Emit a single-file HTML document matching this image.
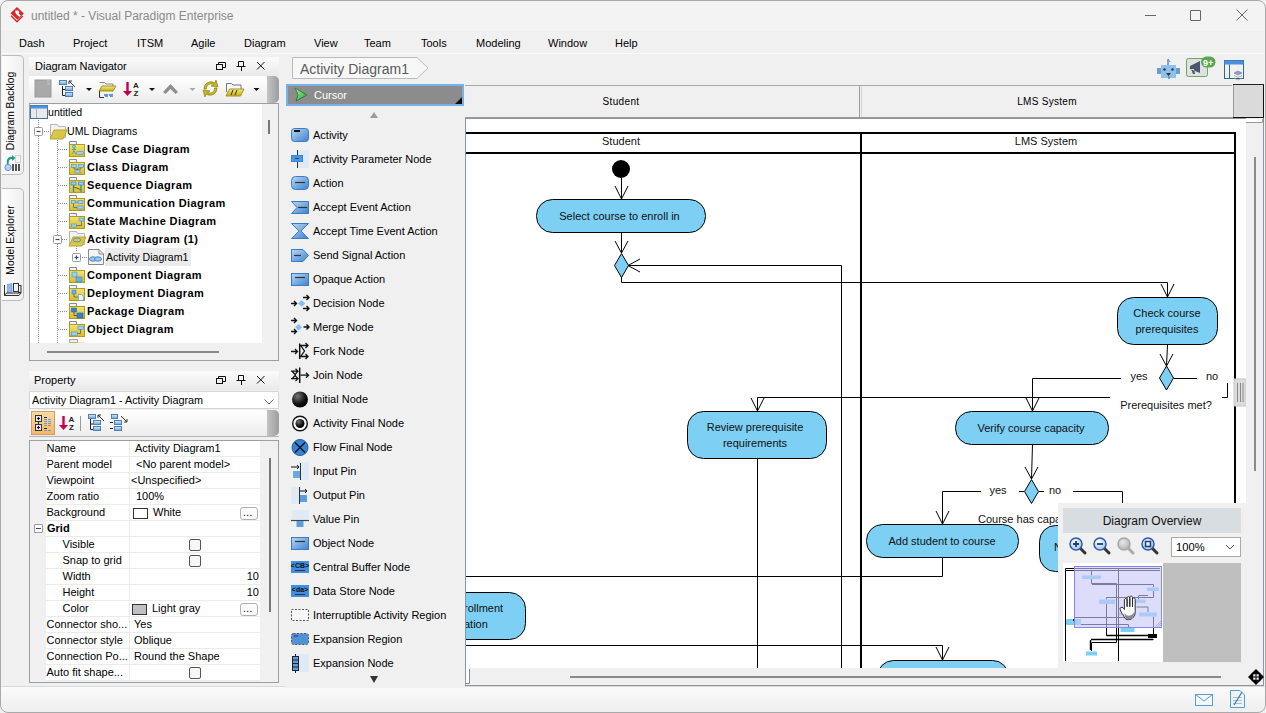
<!DOCTYPE html>
<html><head><meta charset="utf-8">
<style>
*{box-sizing:border-box;margin:0;padding:0}
html,body{width:1266px;height:713px;overflow:hidden;background:#f0f0f0;font-family:"Liberation Sans",sans-serif;font-size:11px;color:#000}
.a{position:absolute}
.t{position:absolute;white-space:nowrap;line-height:14px}
#win{position:absolute;left:0;top:0;width:1266px;height:713px;background:#f0f0f0;overflow:hidden}
.mi{position:absolute;top:36px;font-size:11px;line-height:14px}
.hdr{position:absolute;background:linear-gradient(#fbfbfb,#e9e9e9)}
.tb{position:absolute;background:linear-gradient(#ffffff,#ececec);border-radius:0 6px 6px 0}
.grip{position:absolute;background:linear-gradient(90deg,#c4c4c4,#9d9d9d);border-radius:0 5px 5px 0}
.tr{position:absolute;white-space:nowrap;line-height:14px;font-size:11px}
.b{font-weight:bold}
.pi{position:absolute;left:313px;white-space:nowrap;font-size:11px;line-height:14px;color:#000}
.pr{position:absolute;left:46px;width:214px;height:16px;border-bottom:1px solid #ececec;background:#fff}
.pr span{position:absolute;top:1px;white-space:nowrap;font-size:11px;line-height:14px}
.node{position:absolute;background:#7dcff4;border:1px solid #222;border-radius:16px;display:flex;align-items:center;justify-content:center;text-align:center;font-size:11px;line-height:16px;color:#111}
</style></head><body>
<div id="win">
 <!-- title bar -->
 <div class="a" style="left:0;top:0;width:1266px;height:31px;background:#f3f3f3"></div>
 <svg class="a" style="left:8px;top:5px" width="18" height="20" viewBox="8 5 18 20"><path d="M17 7 L23.8 13.6 L17.6 19.8 L10.4 13.2 Z" fill="#d42a2a"/><path d="M10.6 16.2 L17 22.7 L23.3 16.4 L22.3 15.4 L17 20.8 L11.6 15.2 Z" fill="#d42a2a"/><path d="M15.3 10.6 L18.3 10.4 L19.3 12.2 L18.6 13.6 L20.6 15.6 L19.4 17 L16.6 14.4 L15.4 12.8 Z" fill="#fff"/></svg>
 <div class="t" style="left:31px;top:9px;font-size:12px;color:#8a8a8a">untitled * - Visual Paradigm Enterprise</div>
 <div class="a" style="left:1145px;top:15px;width:11px;height:1px;background:#666"></div>
 <div class="a" style="left:1190px;top:10px;width:11px;height:11px;border:1px solid #666;border-radius:1px"></div>
 <svg class="a" style="left:1236px;top:9px" width="12" height="12"><path d="M0.5 0.5 L11.5 11.5 M11.5 0.5 L0.5 11.5" stroke="#666" stroke-width="1"/></svg>
 <!-- menu -->
 <span class="mi" style="left:19px">Dash</span>
 <span class="mi" style="left:73px">Project</span>
 <span class="mi" style="left:137px">ITSM</span>
 <span class="mi" style="left:191px">Agile</span>
 <span class="mi" style="left:244px">Diagram</span>
 <span class="mi" style="left:314px">View</span>
 <span class="mi" style="left:364px">Team</span>
 <span class="mi" style="left:421px">Tools</span>
 <span class="mi" style="left:476px">Modeling</span>
 <span class="mi" style="left:548px">Window</span>
 <span class="mi" style="left:615px">Help</span>

 <div class="a" style="left:0;top:53px;width:1266px;height:1px;background:#fbfbfb"></div>
 <!-- window border -->
 <div class="a" style="left:0;top:0;width:1266px;height:713px;border:1px solid #a9a9a9;border-radius:8px 8px 8px 8px;pointer-events:none;z-index:50"></div>

 <!-- LEFT vertical tabs -->
 <div class="a" style="left:2px;top:55px;width:22px;height:120px;background:linear-gradient(90deg,#fdfdfd,#f0f0f0);border:1px solid #bcbcbc;border-left:none;border-radius:0 5px 5px 0"></div>
 <div class="a" style="left:2px;top:188px;width:22px;height:113px;background:linear-gradient(90deg,#fdfdfd,#f0f0f0);border:1px solid #bcbcbc;border-left:none;border-radius:0 5px 5px 0"></div>
 <div class="t" style="left:-34px;top:104px;width:90px;transform:rotate(-90deg);font-size:10.3px;text-align:center">Diagram Backlog</div>
 <div class="t" style="left:-34px;top:233px;width:90px;transform:rotate(-90deg);font-size:10.3px;text-align:center">Model Explorer</div>
 <svg class="a" style="left:3px;top:153px" width="20" height="20" viewBox="3 153 20 20">
  <path d="M7 164 C6 159 9 156 12 157 L12 155 L15.5 158 L12 161 L12 159 C10 158.5 8.5 160 8.5 164 Z" fill="#1f9a86"/>
  <circle cx="8" cy="167.5" r="3.2" fill="#b8d0f0" stroke="#6d98d8"/>
  <rect x="12" y="164" width="2" height="7" fill="#555"/><rect x="15" y="164" width="2" height="7" fill="#555"/><rect x="18" y="164" width="2" height="7" fill="#555"/>
  <rect x="15.5" y="155.5" width="5" height="7" fill="none" stroke="#d0d0d0"/>
 </svg>
 <svg class="a" style="left:3px;top:280px" width="20" height="18" viewBox="3 280 20 18">
  <path d="M7.5 284.5 L12 283.5 V292 L7.5 293 Z" fill="#8eb8ee" stroke="#5c8fd6" stroke-width="0.6"/>
  <rect x="13.5" y="283.5" width="5" height="8" fill="#eef4fc" stroke="#333"/>
  <rect x="18.5" y="285.5" width="2.5" height="7" fill="#e8e8e8" stroke="#333"/>
  <path d="M4.5 295.5 H19 L21 293 H6.5 Z" fill="#e8e8e8" stroke="#333"/>
  <path d="M4.5 285 V295.5" stroke="#333"/>
 </svg>
 <!-- DIAGRAM NAVIGATOR -->
 <div class="hdr" style="left:29px;top:57px;width:250px;height:19px"></div>
 <div class="t" style="left:35px;top:59px">Diagram Navigator</div>
 <div class="tb" style="left:29px;top:76px;width:240px;height:27px"></div>
 <div class="grip" style="left:267px;top:76px;width:12px;height:27px"></div>
 <div class="a" style="left:29px;top:103px;width:250px;height:258px;border:1px solid #9a9fa6;background:#f0f0f0"></div>
 <div class="a" style="left:30px;top:104px;width:232px;height:239px;background:#fff"></div>
 <div class="a" style="left:268px;top:120px;width:2px;height:14px;background:#777"></div>

 <!-- NAV TOOLBAR ICONS -->
 <svg class="a" style="left:29px;top:76px" width="240" height="27" viewBox="29 76 240 27">
  <defs>
   <linearGradient id="bx" x1="0" y1="0" x2="0" y2="1"><stop offset="0" stop-color="#d8ebfc"/><stop offset="1" stop-color="#6fa5dc"/></linearGradient>
   <linearGradient id="yf" x1="0" y1="0" x2="0" y2="1"><stop offset="0" stop-color="#f4ea90"/><stop offset="1" stop-color="#c2aa10"/></linearGradient>
  </defs>
  <rect x="35" y="80" width="16" height="17" fill="#a9a9a9" stroke="#9a9a9a"/>
  <path d="M47 81 h3 M47 84 h3" stroke="#c8c8c8"/>
  <path d="M62.5 86 V95.5 H65 M62.5 89.5 H65" stroke="#222" fill="none"/>
  <rect x="59.5" y="80.5" width="7" height="4" fill="url(#bx)" stroke="#4f7fb8"/>
  <rect x="65.5" y="86.5" width="7" height="4" fill="url(#bx)" stroke="#4f7fb8"/>
  <rect x="65.5" y="92.5" width="7" height="4" fill="url(#bx)" stroke="#4f7fb8"/>
  <path d="M69 81 L75 87 M69 81 h3 M69 81 v3" stroke="#333" fill="none"/>
  <path d="M86 88 h6 l-3 3 z" fill="#111"/>
  <path d="M99.5 82.5 h5 l1.5 1.5 h7 v3" fill="#f4f4f4" stroke="#888"/>
  <path d="M99 91 L102 86 H116 L113 91 Z" fill="url(#yf)" stroke="#a89410"/>
  <path d="M99.5 91 V97.5 H104 M104 95 h4 M109 95 h4" stroke="#333" fill="none"/>
  <rect x="105" y="94" width="3" height="3" fill="#5a9ae0"/><rect x="110" y="94" width="3" height="3" fill="#5a9ae0"/>
  <path d="M127.5 82 V93" stroke="#c8004a" stroke-width="2.4"/><path d="M123 91 L127.5 96 L132 91 Z" fill="#c8004a"/>
  <text x="136" y="88" font-size="8" font-weight="bold" text-anchor="middle" fill="#222">A</text>
  <text x="136" y="96" font-size="8" font-weight="bold" text-anchor="middle" fill="#222">Z</text>
  <path d="M149 88 h6 l-3 3 z" fill="#111"/>
  <path d="M163 92 L170.5 84 L178 92 L175.5 94 L170.5 89 L165.5 94 Z" fill="#8e8e8e"/>
  <path d="M189.5 88 h6 l-3 3 z" fill="#a8a8a8"/>
  <path d="M204 89 C204 83 210 80 215 83 L216 80 L218 87 L211 86 L213.5 84.5 C210 83 206 85 206.5 89 Z" fill="#c8b820" stroke="#7a6e08" stroke-width="0.6"/>
  <path d="M217 88 C217 94 211 97 206 94 L205 97 L203 90 L210 91 L207.5 92.5 C211 94 215 92 214.5 88 Z" fill="#c8b820" stroke="#7a6e08" stroke-width="0.6"/>
  <path d="M226.5 92 V83.5 h5 l1.5 1.5 h8 v4" fill="#f8f8f8" stroke="#777"/>
  <path d="M226 96 L229.5 89 H244 L240.5 96 Z" fill="url(#yf)" stroke="#a89410"/>
  <path d="M233 90 L231 95 M237 90 L235 95" stroke="#333"/>
  <path d="M253.5 88 h6 l-3 3 z" fill="#111"/>
 </svg>
 <!-- TREE -->
 <svg class="a" style="left:30px;top:104px" width="232" height="239" viewBox="30 104 232 239">
  <defs><linearGradient id="fy" x1="0" y1="0" x2="0" y2="1"><stop offset="0" stop-color="#f4e478"/><stop offset="1" stop-color="#d6bc2a"/></linearGradient></defs>
  <g stroke="#8a8a8a" stroke-dasharray="1 1" fill="none">
   <path d="M38.5 120 V343 M42 131.5 H49 M57.5 140 V343 M76.5 246 V252"/>
   <path d="M58 149.5 H68"/>
   <path d="M58 167.5 H68"/>
   <path d="M58 185.5 H68"/>
   <path d="M58 203.5 H68"/>
   <path d="M58 221.5 H68"/>
   <path d="M62 239.5 H68"/>
   <path d="M80 257.5 H87"/>
   <path d="M58 275.5 H68"/>
   <path d="M58 293.5 H68"/>
   <path d="M58 311.5 H68"/>
   <path d="M58 329.5 H68"/>
   <path d="M58 347.5 H68"/>
  </g>
  <rect x="30.5" y="105.5" width="17" height="13" fill="#e9e9e9" stroke="#4a6f94"/><rect x="30.5" y="105.5" width="17" height="3" fill="#4d8fe0"/><path d="M36.5 109 V118" stroke="#9bb"/>
  <rect x="34.5" y="127.5" width="8" height="8" fill="#fff" stroke="#9a9a9a" rx="1"/><path d="M36.5 131.5 H40.5" stroke="#2b4b8c" stroke-width="1.2"/>
  <rect x="53.5" y="235.5" width="8" height="8" fill="#fff" stroke="#9a9a9a" rx="1"/><path d="M55.5 239.5 H59.5" stroke="#2b4b8c" stroke-width="1.2"/>
  <rect x="72.5" y="253.5" width="8" height="8" fill="#fff" stroke="#9a9a9a" rx="1"/><path d="M74.5 257.5 H78.5" stroke="#2b4b8c" stroke-width="1.2"/><path d="M76.5 255.5 V259.5" stroke="#2b4b8c" stroke-width="1.2"/>
  <path d="M50.5 124.5 h7 l1 2 h7 v11 h-15 z" fill="#f2f2f2" stroke="#b5b5b5"/><path d="M50 139 L54 130 H67 L63 139 Z" fill="#d8c84a" stroke="#b9a52a"/>
  <path d="M69.5 141.5 h7 v3 h-7 z" fill="#f4f4f4" stroke="#8a8a8a"/>
  <rect x="69.5" y="144.5" width="15" height="12" fill="url(#fy)" stroke="#b09a20"/>
  <g transform="translate(0,0)"><circle cx="74" cy="146.5" r="1.5" fill="#8cc4ec" stroke="#3a86c8" stroke-width="0.6"/><path d="M74 148 V151 L72 154 M74 151 L76 154 M72 149.5 H76" stroke="#3a9a8a" stroke-width="0.8" fill="none"/><rect x="76.5" y="151.5" width="7" height="3" rx="1.2" fill="#9cd0f0" stroke="#4a90c8" stroke-width="0.6"/></g>
  <path d="M69.5 159.5 h7 v3 h-7 z" fill="#f4f4f4" stroke="#8a8a8a"/>
  <rect x="69.5" y="162.5" width="15" height="12" fill="url(#fy)" stroke="#b09a20"/>
  <g transform="translate(0,18)"><rect x="71.5" y="146.5" width="5" height="3" fill="#9cd0f0" stroke="#4a90c8" stroke-width="0.6"/><rect x="78.5" y="146.5" width="5" height="3" fill="#9cd0f0" stroke="#4a90c8" stroke-width="0.6"/><rect x="75" y="152" width="5" height="3" fill="#9cd0f0" stroke="#4a90c8" stroke-width="0.6"/><path d="M74 149.5 V151 H81 V149.5 M77.5 151 V152" stroke="#555" stroke-width="0.7" fill="none"/></g>
  <path d="M69.5 177.5 h7 v3 h-7 z" fill="#f4f4f4" stroke="#8a8a8a"/>
  <rect x="69.5" y="180.5" width="15" height="12" fill="url(#fy)" stroke="#b09a20"/>
  <g transform="translate(0,36)"><rect x="71" y="146" width="5" height="3" fill="#9cd0f0" stroke="#2a80c8" stroke-width="0.7"/><rect x="78.5" y="146" width="5" height="3" fill="#9cd0f0" stroke="#2a80c8" stroke-width="0.7"/><path d="M73.5 149 V156 M81 149 V156" stroke="#2a80c8" stroke-width="1.2"/><path d="M74 151 L80.5 153.5" stroke="#333" stroke-width="0.7"/></g>
  <path d="M69.5 195.5 h7 v3 h-7 z" fill="#f4f4f4" stroke="#8a8a8a"/>
  <rect x="69.5" y="198.5" width="15" height="12" fill="url(#fy)" stroke="#b09a20"/>
  <g transform="translate(0,54)"><rect x="71.5" y="146.5" width="4" height="3" fill="#9cd0f0" stroke="#4a90c8" stroke-width="0.6"/><rect x="78" y="146.5" width="5" height="3" fill="#9cd0f0" stroke="#4a90c8" stroke-width="0.6"/><rect x="77" y="152" width="6" height="3" fill="#9cd0f0" stroke="#4a90c8" stroke-width="0.6"/><path d="M73.5 149.5 V153.5 H77 M75.5 148 H78" stroke="#555" stroke-width="0.7" fill="none"/></g>
  <path d="M69.5 213.5 h7 v3 h-7 z" fill="#f4f4f4" stroke="#8a8a8a"/>
  <rect x="69.5" y="216.5" width="15" height="12" fill="url(#fy)" stroke="#b09a20"/>
  <g transform="translate(0,72)"><rect x="79" y="146" width="5" height="3" fill="#9cd0f0" stroke="#4a90c8" stroke-width="0.6"/><rect x="71.5" y="152" width="5" height="3" fill="#9cd0f0" stroke="#4a90c8" stroke-width="0.6"/><path d="M81.5 149 V153.5 H76.5" stroke="#555" stroke-width="0.7" fill="none"/></g>
  <path d="M69.5 231.5 h7 l1 2 h7 v11 h-15 z" fill="#f2f2f2" stroke="#b5b5b5"/><path d="M69 246 L73 237 H86 L82 246 Z" fill="#d8c84a" stroke="#b9a52a"/>
  <ellipse cx="77" cy="240" rx="4" ry="2" fill="none" stroke="#5a8fc8"/>
  <path d="M69.5 267.5 h7 v3 h-7 z" fill="#f4f4f4" stroke="#8a8a8a"/>
  <rect x="69.5" y="270.5" width="15" height="12" fill="url(#fy)" stroke="#b09a20"/>
  <g transform="translate(0,126)"><rect x="72" y="146" width="5" height="5" fill="#9cd0f0" stroke="#4a90c8" stroke-width="0.6"/><rect x="76" y="151" width="6" height="5" fill="#6ab0e8" stroke="#3a80c8" stroke-width="0.6"/></g>
  <path d="M69.5 285.5 h7 v3 h-7 z" fill="#f4f4f4" stroke="#8a8a8a"/>
  <rect x="69.5" y="288.5" width="15" height="12" fill="url(#fy)" stroke="#b09a20"/>
  <g transform="translate(0,144)"><rect x="72" y="146" width="4" height="4" fill="#6ab0e8" stroke="#3a80c8" stroke-width="0.6"/><path d="M78.5 150.5 h3 l2 2 v4 h-5 z" fill="#e8f4fc" stroke="#4a90c8" stroke-width="0.6"/><path d="M74 150 V153 H78" stroke="#555" stroke-width="0.7" fill="none"/></g>
  <path d="M69.5 303.5 h7 v3 h-7 z" fill="#f4f4f4" stroke="#8a8a8a"/>
  <rect x="69.5" y="306.5" width="15" height="12" fill="url(#fy)" stroke="#b09a20"/>
  <g transform="translate(0,162)"><rect x="71.5" y="146" width="5" height="4" fill="#3a80d0" stroke="#2a60a8" stroke-width="0.6"/><rect x="77" y="151" width="6" height="5" fill="#3a80d0" stroke="#2a60a8" stroke-width="0.6"/><path d="M74 150 V153.5 H77" stroke="#333" stroke-width="0.7" fill="none"/></g>
  <path d="M69.5 321.5 h7 v3 h-7 z" fill="#f4f4f4" stroke="#8a8a8a"/>
  <rect x="69.5" y="324.5" width="15" height="12" fill="url(#fy)" stroke="#b09a20"/>
  <g transform="translate(0,180)"><rect x="78" y="146" width="5.5" height="3.5" fill="#9cd0f0" stroke="#4a90c8" stroke-width="0.6"/><rect x="71.5" y="152" width="6" height="3.5" fill="#9cd0f0" stroke="#4a90c8" stroke-width="0.6"/><path d="M80.5 149.5 V153.5 H77.5" stroke="#555" stroke-width="0.7" fill="none"/></g>
  <path d="M69.5 339.5 h8 v3 h-8 z" fill="#ececec" stroke="#a0a0a0"/><rect x="69.5" y="342.5" width="15" height="5" fill="#dcc94c"/>
  <path d="M88.5 249.5 H99 L103.5 254 V264.5 H88.5 Z" fill="#f4f4f4" stroke="#888"/><path d="M99 249.5 V254 H103.5" fill="none" stroke="#888"/><ellipse cx="93" cy="259" rx="3.5" ry="2.2" fill="#9cc8f0" stroke="#4a86c8"/><ellipse cx="98" cy="259" rx="3.5" ry="2.2" fill="#9cc8f0" stroke="#4a86c8"/>
  <rect x="105" y="248" width="86" height="18" fill="#ebebeb"/>
 </svg>
 <div class="tr" style="left:48px;top:105px;font-size:10.6px">untitled</div>
 <div class="tr" style="left:67px;top:124px;font-size:10.6px">UML Diagrams</div>
 <div class="tr b" style="left:87px;top:142px;font-size:11px;letter-spacing:0.4px">Use Case Diagram</div>
 <div class="tr b" style="left:87px;top:160px;font-size:11px;letter-spacing:0.4px">Class Diagram</div>
 <div class="tr b" style="left:87px;top:178px;font-size:11px;letter-spacing:0.4px">Sequence Diagram</div>
 <div class="tr b" style="left:87px;top:196px;font-size:11px;letter-spacing:0.4px">Communication Diagram</div>
 <div class="tr b" style="left:87px;top:214px;font-size:11px;letter-spacing:0.4px">State Machine Diagram</div>
 <div class="tr b" style="left:87px;top:232px;font-size:11px;letter-spacing:0.4px">Activity Diagram (1)</div>
 <div class="tr" style="left:106px;top:250px;font-size:10.6px">Activity Diagram1</div>
 <div class="tr b" style="left:87px;top:268px;font-size:11px;letter-spacing:0.4px">Component Diagram</div>
 <div class="tr b" style="left:87px;top:286px;font-size:11px;letter-spacing:0.4px">Deployment Diagram</div>
 <div class="tr b" style="left:87px;top:304px;font-size:11px;letter-spacing:0.4px">Package Diagram</div>
 <div class="tr b" style="left:87px;top:322px;font-size:11px;letter-spacing:0.4px">Object Diagram</div>
 <div class="a" style="left:47px;top:351px;width:172px;height:2px;background:#888"></div>

 <!-- PROPERTY -->
 <div class="hdr" style="left:29px;top:371px;width:250px;height:19px"></div>
 <div class="t" style="left:34px;top:373px">Property</div>
 <div class="a" style="left:29px;top:391px;width:250px;height:18px;background:#fff;border:1px solid #d5d5d5"></div>
 <div class="t" style="left:32px;top:393px;font-size:10.8px">Activity Diagram1 - Activity Diagram</div>
 <div class="tb" style="left:29px;top:410px;width:240px;height:26px"></div>
 <div class="grip" style="left:267px;top:410px;width:12px;height:26px"></div>
 <div class="a" style="left:29px;top:440px;width:250px;height:243px;border:1px solid #9a9fa6;background:#f0f0f0"></div>
 <div class="a" style="left:29px;top:436px;width:250px;height:1px;background:#b4b4b4"></div>
 <!-- PROP TOOLBAR ICONS -->
 <svg class="a" style="left:29px;top:410px" width="240" height="26" viewBox="29 410 240 26">
  <defs><linearGradient id="og" x1="0" y1="0" x2="0" y2="1"><stop offset="0" stop-color="#ffdba0"/><stop offset="1" stop-color="#f7b565"/></linearGradient></defs>
  <rect x="31.5" y="411.5" width="23" height="23" fill="url(#og)" stroke="#caa070"/>
  <rect x="35.5" y="415.5" width="6" height="6" fill="#dbe9f8" stroke="#333"/><path d="M37 418.5 h3 M38.5 417 v3" stroke="#111"/>
  <rect x="35.5" y="424.5" width="6" height="6" fill="#dbe9f8" stroke="#333"/><path d="M37 427.5 h3 M38.5 426 v3" stroke="#111"/>
  <path d="M38.5 421.5 V424.5" stroke="#333"/>
  <path d="M44 419.5 h3 M48 419.5 h3 M44 421.5 h3 M48 421.5 h3 M44 423.5 h3 M48 423.5 h3 M44 425.5 h3 M48 425.5 h3 M44 430.5 h3 M48 430.5 h3" stroke="#6a9ad0"/><path d="M44 417.5 h3 M44 428.5 h3" stroke="#222"/>
  
  <path d="M63.5 416 V427" stroke="#c8004a" stroke-width="2.4"/><path d="M59 425 L63.5 430 L68 425 Z" fill="#c8004a"/>
  <text x="71.5" y="422" font-size="8" font-weight="bold" text-anchor="middle" fill="#222">A</text>
  <text x="71.5" y="430" font-size="8" font-weight="bold" text-anchor="middle" fill="#222">Z</text>
  <path d="M80.5 416 V431" stroke="#9a9a9a"/>
  <path d="M90.5 419 V429.5 H93 M90.5 424 H93" stroke="#222" fill="none"/>
  <rect x="88.5" y="414.5" width="7" height="4" fill="url(#bx)" stroke="#4f7fb8"/>
  <rect x="93.5" y="420.5" width="7" height="4" fill="url(#bx)" stroke="#4f7fb8"/>
  <rect x="93.5" y="426.5" width="7" height="4" fill="url(#bx)" stroke="#4f7fb8"/>
  <path d="M98 415 L104 421 M98 415 h3 M98 415 v3" stroke="#333" fill="none"/>
  <rect x="111.5" y="414.5" width="6" height="4" fill="url(#bx)" stroke="#4f7fb8"/>
  <rect x="114.5" y="420.5" width="7" height="4" fill="url(#bx)" stroke="#4f7fb8"/>
  <rect x="114.5" y="426.5" width="7" height="4" fill="url(#bx)" stroke="#4f7fb8"/>
  <path d="M110 422.5 h3 M110 428.5 h3" stroke="#222"/>
  <path d="M121 416 L127 422 M127 419 v3 h-3" stroke="#333" fill="none"/>
 </svg>
 <!-- PROPERTY ROWS -->
 <div class="a" style="left:30px;top:441px;width:248px;height:241px;overflow:hidden">
  <div class="a" style="left:16px;top:0px;width:214px;height:16px;background:#fff;border-bottom:1px solid #ebebeb"></div>
  <div class="a" style="left:99px;top:0px;width:1px;height:16px;background:#ebebeb"></div>
  <div class="tr" style="left:16.5px;top:0px">Name</div>
  <div class="tr" style="left:105px;top:0px">Activity Diagram1</div>
  <div class="a" style="left:16px;top:16px;width:214px;height:16px;background:#fff;border-bottom:1px solid #ebebeb"></div>
  <div class="a" style="left:99px;top:16px;width:1px;height:16px;background:#ebebeb"></div>
  <div class="tr" style="left:16.5px;top:16px">Parent model</div>
  <div class="tr" style="left:106px;top:16px">&lt;No parent model&gt;</div>
  <div class="a" style="left:16px;top:32px;width:214px;height:16px;background:#fff;border-bottom:1px solid #ebebeb"></div>
  <div class="a" style="left:99px;top:32px;width:1px;height:16px;background:#ebebeb"></div>
  <div class="tr" style="left:16.5px;top:32px">Viewpoint</div>
  <div class="tr" style="left:101px;top:32px">&lt;Unspecified&gt;</div>
  <div class="a" style="left:16px;top:48px;width:214px;height:16px;background:#fff;border-bottom:1px solid #ebebeb"></div>
  <div class="a" style="left:99px;top:48px;width:1px;height:16px;background:#ebebeb"></div>
  <div class="tr" style="left:16.5px;top:48px">Zoom ratio</div>
  <div class="tr" style="left:106px;top:48px">100%</div>
  <div class="a" style="left:16px;top:64px;width:214px;height:16px;background:#fff;border-bottom:1px solid #ebebeb"></div>
  <div class="a" style="left:99px;top:64px;width:1px;height:16px;background:#ebebeb"></div>
  <div class="tr" style="left:16.5px;top:64px">Background</div>
  <div class="a" style="left:103px;top:67px;width:15px;height:11px;border:1px solid #333;background:#fff"></div>
  <div class="tr" style="left:123px;top:64px">White</div>
  <div class="a" style="left:210px;top:66px;width:18px;height:13px;border:1px solid #b0b0b0;border-radius:3px;background:#fafafa"></div><div class="tr" style="left:213px;top:67px;font-size:10px;line-height:10px;letter-spacing:0.5px">...</div>
  <div class="a" style="left:16px;top:80px;width:214px;height:16px;background:#fff;border-bottom:1px solid #ebebeb"></div>
  <div class="a" style="left:99px;top:80px;width:1px;height:16px;background:#ebebeb"></div>
  <div class="tr b" style="left:17.0px;top:80px">Grid</div>
  <div class="a" style="left:4px;top:83px;width:9px;height:9px;border:1px solid #9a9a9a;border-radius:1px;background:#fff"></div><div class="a" style="left:6px;top:87px;width:5px;height:1px;background:#2b4b8c"></div>
  <div class="a" style="left:16px;top:96px;width:214px;height:16px;background:#fff;border-bottom:1px solid #ebebeb"></div>
  <div class="a" style="left:99px;top:96px;width:1px;height:16px;background:#ebebeb"></div>
  <div class="tr" style="left:32.5px;top:96px">Visible</div>
  <div class="a" style="left:159px;top:98px;width:12px;height:12px;border:1px solid #555;border-radius:2px;background:#f7f7f7"></div>
  <div class="a" style="left:16px;top:112px;width:214px;height:16px;background:#fff;border-bottom:1px solid #ebebeb"></div>
  <div class="a" style="left:99px;top:112px;width:1px;height:16px;background:#ebebeb"></div>
  <div class="tr" style="left:32.5px;top:112px">Snap to grid</div>
  <div class="a" style="left:159px;top:114px;width:12px;height:12px;border:1px solid #555;border-radius:2px;background:#f7f7f7"></div>
  <div class="a" style="left:16px;top:128px;width:214px;height:16px;background:#fff;border-bottom:1px solid #ebebeb"></div>
  <div class="a" style="left:99px;top:128px;width:1px;height:16px;background:#ebebeb"></div>
  <div class="tr" style="left:32.5px;top:128px">Width</div>
  <div class="tr" style="left:100px;width:129px;text-align:right;top:128px">10</div>
  <div class="a" style="left:16px;top:144px;width:214px;height:16px;background:#fff;border-bottom:1px solid #ebebeb"></div>
  <div class="a" style="left:99px;top:144px;width:1px;height:16px;background:#ebebeb"></div>
  <div class="tr" style="left:32.5px;top:144px">Height</div>
  <div class="tr" style="left:100px;width:129px;text-align:right;top:144px">10</div>
  <div class="a" style="left:16px;top:160px;width:214px;height:16px;background:#fff;border-bottom:1px solid #ebebeb"></div>
  <div class="a" style="left:99px;top:160px;width:1px;height:16px;background:#ebebeb"></div>
  <div class="tr" style="left:32.5px;top:160px">Color</div>
  <div class="a" style="left:102px;top:163px;width:15px;height:11px;border:1px solid #333;background:#c0c0c0"></div>
  <div class="tr" style="left:122px;top:160px">Light gray</div>
  <div class="a" style="left:210px;top:162px;width:18px;height:13px;border:1px solid #b0b0b0;border-radius:3px;background:#fafafa"></div><div class="tr" style="left:213px;top:163px;font-size:10px;line-height:10px;letter-spacing:0.5px">...</div>
  <div class="a" style="left:16px;top:176px;width:214px;height:16px;background:#fff;border-bottom:1px solid #ebebeb"></div>
  <div class="a" style="left:99px;top:176px;width:1px;height:16px;background:#ebebeb"></div>
  <div class="tr" style="left:16.5px;top:176px">Connector sho...</div>
  <div class="tr" style="left:104px;top:176px">Yes</div>
  <div class="a" style="left:16px;top:192px;width:214px;height:16px;background:#fff;border-bottom:1px solid #ebebeb"></div>
  <div class="a" style="left:99px;top:192px;width:1px;height:16px;background:#ebebeb"></div>
  <div class="tr" style="left:16.5px;top:192px">Connector style</div>
  <div class="tr" style="left:104px;top:192px">Oblique</div>
  <div class="a" style="left:16px;top:208px;width:214px;height:16px;background:#fff;border-bottom:1px solid #ebebeb"></div>
  <div class="a" style="left:99px;top:208px;width:1px;height:16px;background:#ebebeb"></div>
  <div class="tr" style="left:16.5px;top:208px">Connection Po...</div>
  <div class="tr" style="left:104px;top:208px">Round the Shape</div>
  <div class="a" style="left:16px;top:224px;width:214px;height:16px;background:#fff;border-bottom:1px solid #ebebeb"></div>
  <div class="a" style="left:99px;top:224px;width:1px;height:16px;background:#ebebeb"></div>
  <div class="tr" style="left:16.5px;top:224px">Auto fit shape...</div>
  <div class="a" style="left:159px;top:226px;width:12px;height:12px;border:1px solid #555;border-radius:2px;background:#f7f7f7"></div>
 </div>
 <div class="a" style="left:269px;top:458px;width:2px;height:154px;background:#777"></div>

 <!-- status bar -->
 <div class="a" style="left:0;top:686px;width:1266px;height:27px;background:linear-gradient(#fafafa,#eeeeee);border-top:1px solid #d9d9d9"></div>


 <!-- PALETTE -->
 <div class="a" style="left:285px;top:84px;width:180px;height:604px;background:#f0f0f0"></div>
 <div class="a" style="left:286px;top:84px;width:178px;height:22px;background:#8c8c8c;border:2px solid #78b0ec"></div>
 <div class="t" style="left:314px;top:88px;color:#fff;font-size:11px">Cursor</div>
 <!-- PALETTE ITEMS -->
 <svg class="a" style="left:285px;top:106px" width="180" height="582" viewBox="285 106 180 582">
  <defs><linearGradient id="pb" x1="0" y1="0" x2="1" y2="1"><stop offset="0" stop-color="#b9d8f4"/><stop offset="1" stop-color="#3d82d0"/></linearGradient>
  <radialGradient id="pk" cx="0.35" cy="0.3" r="0.8"><stop offset="0" stop-color="#777"/><stop offset="0.6" stop-color="#111"/><stop offset="1" stop-color="#000"/></radialGradient></defs>
  <path d="M370 118 L374 112 L378 118 Z" fill="#9a9a9a"/>
  <path d="M370 676 L374 683 L378 676 Z" fill="#333"/>
  <g transform="translate(291,126)"><rect x="0.5" y="2.5" width="17" height="13" rx="3" fill="url(#pb)" stroke="#3a7bc4"/><rect x="3" y="4" width="6" height="2" fill="#111"/></g>
  <g transform="translate(291,150)"><rect x="6" y="0" width="12" height="18" fill="#dfeaf6"/><path d="M6.5 0 V18" stroke="#333"/><rect x="0.5" y="5.5" width="11" height="6" fill="#4f95e0" stroke="#2f86e8"/><path d="M4 8.5 H8" stroke="#345"/></g>
  <g transform="translate(291,174)"><rect x="0.5" y="2.5" width="17" height="13" rx="4" fill="url(#pb)" stroke="#3a7bc4"/><path d="M4 8.5 H14" stroke="#333" stroke-width="1.2"/></g>
  <g transform="translate(291,198)"><path d="M0.5 3.5 H17.5 V15.5 H0.5 L6 9.5 Z" fill="url(#pb)" stroke="#3a7bc4"/><path d="M7 9.5 H16" stroke="#333" stroke-width="1.2"/></g>
  <g transform="translate(291,222)"><path d="M0.5 1.5 H17.5 L10 9 L17.5 16.5 H0.5 L8 9 Z" fill="url(#pb)" stroke="#3a7bc4"/></g>
  <g transform="translate(291,246)"><path d="M0.5 3.5 H12 L17.5 9.5 L12 15.5 H0.5 Z" fill="url(#pb)" stroke="#3a7bc4"/><path d="M3 9.5 H10" stroke="#333" stroke-width="1.2"/></g>
  <g transform="translate(291,270)"><rect x="0.5" y="3.5" width="17" height="12" fill="url(#pb)" stroke="#3a7bc4"/><path d="M4 7.5 H14" stroke="#333" stroke-width="1.2"/></g>
  <g transform="translate(291,294)"><path d="M0.0 9.5 H5.5 M3.0 7.0 L5.5 9.5 L3.0 12.0 M12.0 3.5 H18.0 M15.5 1.0 L18.0 3.5 L15.5 6.0 M12.0 14.5 H18.0 M15.5 12.0 L18.0 14.5 L15.5 17.0" stroke="#111" stroke-width="1.4" fill="none"/><path d="M10.7 6 L14.2 9.4 L10.7 12.8 L7.2 9.4 Z" fill="#7fbef8"/></g>
  <g transform="translate(291,318)"><path d="M0.0 2.5 H5.5 M3.0 0.0 L5.5 2.5 L3.0 5.0 M0.0 13.5 H5.5 M3.0 11.0 L5.5 13.5 L3.0 16.0 M12.5 9.0 H18.0 M15.5 6.5 L18.0 9.0 L15.5 11.5" stroke="#111" stroke-width="1.4" fill="none"/><path d="M7.6 6 L11 9.3 L7.6 12.6 L4.2 9.3 Z" fill="#7fbef8"/></g>
  <g transform="translate(291,342)"><path d="M0.0 9.5 H6.5 M4.0 7.0 L6.5 9.5 L4.0 12.0 M9.0 3.5 H17.0 M14.5 1.0 L17.0 3.5 L14.5 6.0 M9.0 14.5 H17.0 M14.5 12.0 L17.0 14.5 L14.5 17.0 M10 4 L13.5 9 L10 14" stroke="#111" stroke-width="1.3" fill="none"/><path d="M8.7 1.5 V17" stroke="#111" stroke-width="1.5"/></g>
  <g transform="translate(291,366)"><path d="M0.0 5.2 H7.0 M4.5 2.7 L7.0 5.2 L4.5 7.7 M0.0 12.6 H7.0 M4.5 10.1 L7.0 12.6 L4.5 15.1 M9.5 9.2 H17.5 M15.0 6.7 L17.5 9.2 L15.0 11.7 M1 5 L4.5 9 L1 13" stroke="#111" stroke-width="1.3" fill="none"/><path d="M8.7 1.5 V17" stroke="#111" stroke-width="1.5"/></g>
  <g transform="translate(291,390)"><circle cx="9" cy="9.5" r="8" fill="url(#pk)"/></g>
  <g transform="translate(291,414)"><circle cx="9" cy="9.5" r="7.3" fill="#fff" stroke="#111" stroke-width="1.4"/><circle cx="9" cy="9.5" r="4.5" fill="url(#pk)"/></g>
  <g transform="translate(291,438)"><circle cx="9" cy="9.5" r="8" fill="#3584d8" stroke="#1f5fa8"/><path d="M4 4.5 L14 14.5 M14 4.5 L4 14.5" stroke="#111" stroke-width="1.3"/></g>
  <g transform="translate(291,462)"><rect x="8" y="0" width="10" height="18" fill="#dfeaf6"/><rect x="2" y="9" width="7" height="7" fill="#6aa6e0"/><path d="M9.5 1 V18" stroke="#333"/><path d="M0 5 H8 M6 3 L8 5 L6 7" stroke="#111" fill="none"/></g>
  <g transform="translate(291,486)"><rect x="0" y="1" width="10" height="17" fill="#dfeaf6"/><rect x="9" y="9" width="7" height="7" fill="#5a9ee0"/><path d="M8.5 1 V18" stroke="#333"/><path d="M9 5 H16 M14 3 L16 5 L14 7" stroke="#111" fill="none"/></g>
  <g transform="translate(291,510)"><rect x="1" y="0" width="17" height="9" fill="#dfeaf6"/><path d="M0 10.5 H18" stroke="#444" stroke-width="1.2"/><rect x="5.5" y="11" width="7" height="6" fill="#5a9ee0"/></g>
  <g transform="translate(291,534)"><rect x="0.5" y="3.5" width="17" height="12" fill="url(#pb)" stroke="#3a7bc4"/><path d="M4 7.5 H14" stroke="#333" stroke-width="1.2"/></g>
  <g transform="translate(291,558)"><rect x="0" y="3" width="18" height="12" fill="#3f8ee0"/><text x="9" y="9.5" font-size="7" font-weight="bold" text-anchor="middle" fill="#111">&lt;CB&gt;</text><path d="M4 12.5 H14" stroke="#333"/></g>
  <g transform="translate(291,582)"><rect x="0" y="3" width="18" height="12" fill="#3f8ee0"/><text x="9" y="9.5" font-size="7" font-weight="bold" text-anchor="middle" fill="#111">&lt;da&gt;</text><path d="M4 12.5 H14" stroke="#333"/></g>
  <g transform="translate(291,606)"><rect x="0.5" y="3.5" width="17" height="11" fill="#f8f8f8" stroke="#555" stroke-dasharray="2 1.5"/></g>
  <g transform="translate(291,630)"><rect x="0.5" y="3.5" width="17" height="11" rx="2" fill="#4f92d8" stroke="#555" stroke-dasharray="2 1.5"/><path d="M3 6 H7" stroke="#333"/></g>
  <g transform="translate(291,654)"><rect x="4" y="0" width="14" height="18" fill="#dfeaf6"/><rect x="1.5" y="2.5" width="6" height="14" fill="#5a9ee0" stroke="#222"/><path d="M2 6 H7 M2 9.5 H7 M2 13 H7 M4.5 0 V2 M4.5 17 V19" stroke="#222"/></g>
 </svg>
 <div class="pi" style="top:128px">Activity</div>
 <div class="pi" style="top:152px">Activity Parameter Node</div>
 <div class="pi" style="top:176px">Action</div>
 <div class="pi" style="top:200px">Accept Event Action</div>
 <div class="pi" style="top:224px">Accept Time Event Action</div>
 <div class="pi" style="top:248px">Send Signal Action</div>
 <div class="pi" style="top:272px">Opaque Action</div>
 <div class="pi" style="top:296px">Decision Node</div>
 <div class="pi" style="top:320px">Merge Node</div>
 <div class="pi" style="top:344px">Fork Node</div>
 <div class="pi" style="top:368px">Join Node</div>
 <div class="pi" style="top:392px">Initial Node</div>
 <div class="pi" style="top:416px">Activity Final Node</div>
 <div class="pi" style="top:440px">Flow Final Node</div>
 <div class="pi" style="top:464px">Input Pin</div>
 <div class="pi" style="top:488px">Output Pin</div>
 <div class="pi" style="top:512px">Value Pin</div>
 <div class="pi" style="top:536px">Object Node</div>
 <div class="pi" style="top:560px">Central Buffer Node</div>
 <div class="pi" style="top:584px">Data Store Node</div>
 <div class="pi" style="top:608px">Interruptible Activity Region</div>
 <div class="pi" style="top:632px">Expansion Region</div>
 <div class="pi" style="top:656px">Expansion Node</div>
 <svg class="a" style="left:293px;top:87px" width="16" height="16"><defs><linearGradient id="cg" x1="0" y1="0" x2="1" y2="1"><stop offset="0" stop-color="#9ef09e"/><stop offset="1" stop-color="#1faa3a"/></linearGradient></defs><path d="M2 1 L14 8 L3 14 L5 8 Z" fill="url(#cg)" stroke="#2a6a2a" stroke-width="0.8"/></svg>
 <svg class="a" style="left:455px;top:97px" width="8" height="8"><path d="M7 0 V7 H0 Z" fill="#111"/></svg>

 <!-- breadcrumb -->
 <svg class="a" style="left:291px;top:56px" width="140" height="24"><path d="M1.5 1.5 H126 L137 12 L126 22.5 H1.5 Z" fill="#f7f7f7" stroke="#b8bcc2"/></svg>
 <div class="t" style="left:300px;top:61px;font-size:14px;line-height:16px;color:#5a5a5a">Activity Diagram1</div>


 <!-- DIAGRAM SVG -->
 <svg class="a" style="left:0;top:0" width="1266" height="713" viewBox="0 0 1266 713" font-family="Liberation Sans, sans-serif">
  <defs><clipPath id="cv"><rect x="466" y="119" width="780" height="549"/></clipPath></defs>
  <!-- header band -->
  <rect x="465" y="85" width="768" height="33" fill="#f0f0f0"/>
  <line x1="465" y1="85.5" x2="1232" y2="85.5" stroke="#a8a8a8"/>
  <line x1="465" y1="117.5" x2="1233" y2="117.5" stroke="#9a9a9a"/>
  <line x1="859.5" y1="86" x2="859.5" y2="117" stroke="#9d9d9d"/>
  <line x1="861.5" y1="86" x2="861.5" y2="117" stroke="#d5d5d5"/>
  <text x="621" y="105" font-size="10" text-anchor="middle" letter-spacing="0.35">Student</text>
  <text x="1047" y="105" font-size="10" text-anchor="middle" letter-spacing="0.3">LMS System</text>
  <rect x="1233" y="84" width="31" height="34" fill="#dadada"/>
  <line x1="1233.5" y1="84" x2="1233.5" y2="118" stroke="#9a9a9a"/>
  <line x1="1263.5" y1="84" x2="1263.5" y2="118" stroke="#111"/>
  <line x1="1233" y1="117.5" x2="1264" y2="117.5" stroke="#111"/><line x1="1233" y1="84.5" x2="1264" y2="84.5" stroke="#222"/>
  <g clip-path="url(#cv)">
   <rect x="466" y="119" width="780" height="549" fill="#fff"/>
   <!-- swimlane frame -->
   <rect x="465" y="132" width="771" height="2" fill="#000"/>
   <rect x="465" y="152" width="771" height="2" fill="#000"/>
   <rect x="860" y="132" width="2" height="540" fill="#000"/>
   <rect x="1234" y="132" width="2" height="540" fill="#000"/>
   <text x="621" y="145" font-size="11" text-anchor="middle" fill="#111">Student</text>
   <text x="1046" y="145" font-size="11" text-anchor="middle" fill="#111">LMS System</text>
   <g fill="none" stroke="#000" stroke-width="1">
    <!-- initial -> action1 -->
    <path d="M621.5 178 V199"/>
    <path d="M615.0 186.0 L621.5 199.0 L628.0 186.0"/>
    <!-- action1 -> diamond1 -->
    <path d="M621.5 232 V253"/>
    <path d="M615.0 241.0 L621.5 253.0 L628.0 241.0"/>
    <!-- return edge -->
    <path d="M841.5 670 V265.5 H628"/>
    <path d="M640 259 L628 265.5 L640 272"/>
    <!-- diamond1 -> check -->
    <path d="M621.5 277 V282.5 H1167.5 V297"/>
    <path d="M1161.0 284.0 L1167.5 297.0 L1174.0 284.0"/>
    <!-- check -> diamond2 -->
    <path d="M1167.5 345 L1166.5 366"/>
    <path d="M1160.0 354.0 L1166.5 366.0 L1173.0 354.0"/>
    <!-- yes branch -->
    <path d="M1121 378.5 H1032.5 V411"/>
    <path d="M1026.0 398.0 L1032.5 411.0 L1039.0 398.0"/>
    <!-- no branch -->
    <path d="M1174 378.5 H1197"/>
    <path d="M1227.5 383 V397.5 H1222"/>
    <path d="M1110 397.5 H757.5 V411"/>
    <path d="M751.0 398.0 L757.5 411.0 L764.0 398.0"/>
    <!-- review down -->
    <path d="M757.5 458 V670"/>
    <!-- verify -> diamond3 -->
    <path d="M1032.5 444 L1031.5 479"/>
    <path d="M1025.0 467.0 L1031.5 479.0 L1038.0 467.0"/>
    <!-- diamond3 yes -->
    <path d="M1019 491.5 H1024"/>
    <path d="M981 491.5 H942.5 V524"/>
    <path d="M936.0 511.0 L942.5 524.0 L949.0 511.0"/>
    <!-- diamond3 no -->
    <path d="M1039 491.5 H1044"/>
    <path d="M1073 491.5 H1122.5 V525"/>
    <!-- add student down -->
    <path d="M942.5 558 V576.5 H465"/>
    <path d="M465 645.5 H942.5 V660"/>
    <path d="M936.0 647.0 L942.5 660.0 L949.0 647.0"/>
   </g>
   <circle cx="621" cy="169" r="9" fill="#000"/>
   <g fill="#7dcff4" stroke="#000" stroke-width="1">
    <path d="M621.5 253.5 L628.5 265.5 L621.5 277.5 L614.5 265.5 Z"/>
    <path d="M1166.5 366 L1173.5 378 L1166.5 390 L1159.5 378 Z"/>
    <path d="M1031.5 479.5 L1038.5 491.5 L1031.5 503.5 L1024.5 491.5 Z"/>
    <rect x="536.5" y="199.5" width="169" height="33" rx="16" ry="16"/>
    <rect x="1117.5" y="297.5" width="100" height="47" rx="16" ry="16"/>
    <rect x="687.5" y="411.5" width="139" height="47" rx="16" ry="16"/>
    <rect x="955.5" y="411.5" width="153" height="33" rx="16" ry="16"/>
    <rect x="866.5" y="524.5" width="152" height="33" rx="16" ry="16"/>
    <rect x="400.5" y="592.5" width="125" height="47" rx="16" ry="16"/>
    <rect x="877.5" y="660.5" width="131" height="47" rx="16" ry="16"/>
    <rect x="1039.5" y="525.5" width="150" height="46" rx="16" ry="16"/>
   </g>
   <g font-size="11" fill="#111" text-anchor="middle">
    <text x="619.5" y="220">Select course to enroll in</text>
    <text x="1167" y="317">Check course</text>
    <text x="1167" y="333">prerequisites</text>
    <text x="755" y="431">Review prerequisite</text>
    <text x="755" y="447">requirements</text>
    <text x="1031" y="432">Verify course capacity</text>
    <text x="942" y="545">Add student to course</text>
    <text x="1139" y="380">yes</text>
    <text x="1212" y="380">no</text>
    <text x="1166" y="409">Prerequisites met?</text>
    <text x="998" y="494">yes</text>
    <text x="1055" y="494">no</text>
    <text x="978" y="523" text-anchor="start">Course has capacity?</text>
    <text x="1054" y="551" text-anchor="start">N</text>
   </g>
   <g font-size="11" fill="#111">
    <text x="464" y="612">rollment</text>
    <text x="464" y="628">ation</text>
   </g>
   <!-- handle on right border -->
   <rect x="1234" y="379" width="12" height="27" fill="#dcdcdc" stroke="#c8c8c8"/>
   <path d="M1237.5 383 V402 M1240.5 383 V402 M1243 383 V402" stroke="#8a8a8a"/>
  </g>
  <!-- canvas borders -->
  <line x1="465.5" y1="118" x2="465.5" y2="686" stroke="#8d96a0"/>
  <line x1="465" y1="118.5" x2="1246" y2="118.5" stroke="#8d96a0"/>
  <!-- vertical scrollbar -->
  <rect x="1246" y="119" width="18" height="549" fill="#f0f0f0"/>
  <rect x="1254" y="157" width="2" height="314" fill="#8a8a8a"/>
  <rect x="1246" y="119" width="17" height="4" fill="#fff"/><path d="M1246 122.5 H1262.5 V119" stroke="#9a9a9a" fill="none"/>
  <line x1="1263.5" y1="118" x2="1263.5" y2="686" stroke="#8d96a0"/>
  <!-- horizontal scrollbar -->
  <rect x="466" y="668" width="797" height="17" fill="#f0f0f0"/>
  <rect x="570" y="676" width="651" height="2" fill="#8a8a8a"/>
  <line x1="465" y1="685.5" x2="1264" y2="685.5" stroke="#8d96a0"/>
  <path d="M466 668 h4 v16 h-4 z" fill="#fff"/>
  <path d="M469.5 669 V683.5 H466" stroke="#888" fill="none"/>
  <!-- move icon -->
  <g transform="translate(1256,677)">
   <path d="M0 -8 L4 -4 H-4 Z M0 8 L4 4 H-4 Z M-8 0 L-4 -4 V4 Z M8 0 L4 -4 V4 Z" fill="#000"/>
   <rect x="-3.5" y="-3.5" width="7" height="7" fill="none" stroke="#000" stroke-width="1.5"/>
   <path d="M0 -4 V4 M-4 0 H4" stroke="#000"/>
  </g>
 </svg>
 <!-- top-right icons -->
 <svg class="a" style="left:1150px;top:54px" width="100" height="30" viewBox="1150 54 100 30">
  <path d="M1168 59 V65" stroke="#5f8fc8" stroke-width="1.5"/><path d="M1168 59 L1170 62" stroke="#5f8fc8"/>
  <rect x="1161" y="65" width="15" height="13" fill="#8fc0ee"/>
  <rect x="1157" y="68" width="4" height="6" fill="#6a9ccc"/><rect x="1176" y="68" width="4" height="6" fill="#6a9ccc"/>
  <circle cx="1164.5" cy="69.5" r="1.2" fill="#333"/><circle cx="1172.5" cy="69.5" r="1.2" fill="#333"/>
  <path d="M1166 73 h5 l-2.5 3 z" fill="#333"/><rect x="1168" y="76" width="2" height="3" fill="#6a9ccc"/>
  <rect x="1186.5" y="58.5" width="21" height="18" rx="2" fill="#e0e0e0" stroke="#6aa85a"/>
  <path d="M1190 66 L1200 61 V73 L1190 69 Z M1191 69 L1193 74 H1195 L1194 69" fill="#4a5670"/>
  <rect x="1201" y="56.5" width="14.5" height="11" rx="5.5" fill="#5aa84e"/>
  <text x="1208.2" y="65.5" font-size="9" font-weight="bold" text-anchor="middle" fill="#fff">9+</text>
  <rect x="1224.5" y="60.5" width="19" height="18" fill="#f0f0f0" stroke="#2d6a8a"/>
  <rect x="1224.5" y="60.5" width="19" height="4" fill="#4e8ee0"/>
  <path d="M1229.5 64.5 V78.5" stroke="#2d6a8a"/>
  <path d="M1234 73 L1238 71 L1242 73 L1238 75 Z" fill="#8aa4d8" stroke="#777" stroke-width="0.6"/>
  <path d="M1234 75.5 L1238 77.5 L1242 75.5 M1234 78 L1238 80 L1242 78" fill="none" stroke="#999" stroke-width="0.8"/>
 </svg>
 <!-- status bar icons -->
 <svg class="a" style="left:1190px;top:688px" width="60" height="22" viewBox="1190 688 60 22">
  <rect x="1195.5" y="694.5" width="17" height="11" fill="#f4f8fc" stroke="#5a9ad8"/>
  <path d="M1195.5 694.5 L1204 701 L1212.5 694.5" fill="none" stroke="#5a9ad8"/>
  <path d="M1230.5 690.5 H1240 L1244.5 695 V707.5 H1230.5 Z" fill="#f0f4f8" stroke="#5a9ad8"/>
  <path d="M1233 697.5 h9 M1233 700.5 h9 M1233 703.5 h9" stroke="#bbb"/>
  <path d="M1234 705 L1242 692" stroke="#2a8ab8" stroke-width="1.3"/>
 </svg>


 <!-- header buttons nav -->
 <svg class="a" style="left:210px;top:58px" width="60" height="16" viewBox="210 58 60 16">
  <rect x="216.5" y="64.5" width="6" height="5" fill="none" stroke="#111"/><path d="M218.5 64.5 V62.5 H225.5 V67.5 H222.5" fill="none" stroke="#111"/>
  <path d="M238.5 61.5 h5 v5 h-5 z M236.5 66.5 h9 M241.5 67 v4" fill="none" stroke="#111"/>
  <path d="M257 62 L264.5 69.5 M264.5 62 L257 69.5" stroke="#111"/>
 </svg>
 <svg class="a" style="left:210px;top:372px" width="60" height="16" viewBox="210 372 60 16">
  <rect x="216.5" y="378.5" width="6" height="5" fill="none" stroke="#111"/><path d="M218.5 378.5 V376.5 H225.5 V381.5 H222.5" fill="none" stroke="#111"/>
  <path d="M238.5 375.5 h5 v5 h-5 z M236.5 380.5 h9 M241.5 381 v4" fill="none" stroke="#111"/>
  <path d="M257 376 L264.5 383.5 M264.5 376 L257 383.5" stroke="#111"/>
 </svg>
 <svg class="a" style="left:263px;top:397px" width="12" height="10"><path d="M1.5 2.5 L6 7 L10.5 2.5" fill="none" stroke="#666"/></svg>
 <!-- DIAGRAM OVERVIEW -->
 <div class="a" style="left:1058px;top:503px;width:188px;height:165px;background:#f0f0f0"></div>
 <div class="a" style="left:1063px;top:508px;width:178px;height:25px;background:#d8dde1"></div>
 <div class="t" style="left:1063px;top:514px;width:178px;text-align:center;font-size:12px;color:#111">Diagram Overview</div>
 <svg class="a" style="left:1066px;top:536px" width="110" height="22" viewBox="0 0 110 22">
  <defs><radialGradient id="mg" cx="0.4" cy="0.35" r="0.7"><stop offset="0" stop-color="#fff"/><stop offset="1" stop-color="#9cc0e8"/></radialGradient>
  <radialGradient id="mgg" cx="0.4" cy="0.35" r="0.7"><stop offset="0" stop-color="#e8e8e8"/><stop offset="1" stop-color="#b0b0b0"/></radialGradient></defs>
  <g transform="translate(3,1)"><path d="M10 10 L16 16" stroke="#333" stroke-width="3" stroke-linecap="round"/><circle cx="7" cy="7" r="6" fill="url(#mg)" stroke="#2d5aa8" stroke-width="1.5"/><path d="M4 7 H10 M7 4 V10" stroke="#1d3f7a" stroke-width="1.8"/></g>
  <g transform="translate(27,1)"><path d="M10 10 L16 16" stroke="#333" stroke-width="3" stroke-linecap="round"/><circle cx="7" cy="7" r="6" fill="url(#mg)" stroke="#2d5aa8" stroke-width="1.5"/><path d="M4 7 H10" stroke="#1d3f7a" stroke-width="1.8"/></g>
  <g transform="translate(51,1)"><path d="M10 10 L16 16" stroke="#aaa" stroke-width="3" stroke-linecap="round"/><circle cx="7" cy="7" r="6" fill="url(#mgg)" stroke="#a8a8a8" stroke-width="1.5"/></g>
  <g transform="translate(75,1)"><path d="M10 10 L16 16" stroke="#333" stroke-width="3" stroke-linecap="round"/><circle cx="7" cy="7" r="6" fill="url(#mg)" stroke="#2d5aa8" stroke-width="1.5"/><rect x="4.5" y="4.5" width="5" height="5" fill="none" stroke="#1d3f7a" stroke-width="1.5"/></g>
 </svg>
 <div class="a" style="left:1171px;top:537px;width:70px;height:20px;background:#fff;border:1px solid #a9a9a9"></div>
 <div class="t" style="left:1176px;top:540px;font-size:11.2px">100%</div>
 <svg class="a" style="left:1225px;top:543px" width="10" height="8"><path d="M1 2 L5 6 L9 2" fill="none" stroke="#555"/></svg>
 <div class="a" style="left:1063px;top:563px;width:100px;height:99px;background:#fff;overflow:hidden">
  <svg width="100" height="99" viewBox="1 1 100 99">
   <g stroke="#000" fill="none" stroke-width="1">
    <path d="M3.5 99 V6.5 H98 M3.5 8.5 H98"/>
    <path d="M56.5 6 V99"/>
    <path d="M29.5 9 V13.5 M29.5 17 V21.5 H54.5 V80.5 H29.5 V89"/>
    <path d="M30 22.5 H91.5 V25"/>
    <path d="M91.5 29 V35.5 H44.5 V37.5 M76.5 33.5 V37.5 M77 33.5 H86"/>
    <path d="M44.5 42 V73.5 H91.5 V54.5"/>
    <path d="M12 55.5 H65.5 M18 62.5 H66.5 V65.5"/>
    <path d="M29.5 77.5 H91.5"/>
    <path d="M74.5 45 H86 V50"/>
   </g>
   <g stroke="#000" stroke-width="1.4" fill="none"><path d="M44.5 73.5 H94 M29 77.5 H91 M28.5 78 V88"/></g>
   <rect x="86" y="72" width="9" height="4" fill="#000"/>
   <g fill="#7dcff4">
    <rect x="20" y="13.5" width="19" height="3.5"/>
    <rect x="85" y="25.5" width="12" height="3.5"/>
    <rect x="37" y="37.5" width="16" height="4.5"/>
    <rect x="71.5" y="37.5" width="12" height="3.5"/>
    <rect x="77" y="50.5" width="18" height="4"/>
    <rect x="57" y="50.5" width="17" height="3"/>
    <rect x="4" y="57" width="15" height="6"/>
    <rect x="58.5" y="65.5" width="14" height="4.5"/>
    <rect x="24" y="89.5" width="11" height="4"/>
   </g>
   <rect x="11" y="57" width="2" height="2" fill="#000"/>
   <rect x="12.5" y="4.5" width="87" height="61" fill="#c8c8f8" fill-opacity="0.62" stroke="#8484f4"/>
   <path d="M93 65 L99 59 M95 65 L99 61 M97 65 L99 63" stroke="#a8a8e8" stroke-width="0.8"/>
   <g transform="translate(57,34) scale(1.35)">
    <path d="M3 14 C1 11 0 9 1.5 8.5 C2.5 8 3.5 9 4 10 V3 C4 1.5 6 1.5 6 3 V8 V1.5 C6 0 8 0 8 1.5 V8 V1.2 C8 -0.3 10 -0.3 10 1.2 V8 V2.5 C10 1 12 1 12 2.5 V11 C12 15 10 17.5 7 17.5 H6 C5 17.5 4 16 3 14 Z" fill="#fafafa" stroke="#222" stroke-width="0.7"/>
    <path d="M4 12 C5 15 8 16 11.5 12 C11 16 9 17.2 7 17.2 H6 C5 17.2 4.2 15.5 4 12 Z" fill="#8a8a8a"/>
   </g>
  </svg>
 </div>
 <div class="a" style="left:1163px;top:563px;width:78px;height:99px;background:#bfbfbf"></div>
</div>
</body></html>
